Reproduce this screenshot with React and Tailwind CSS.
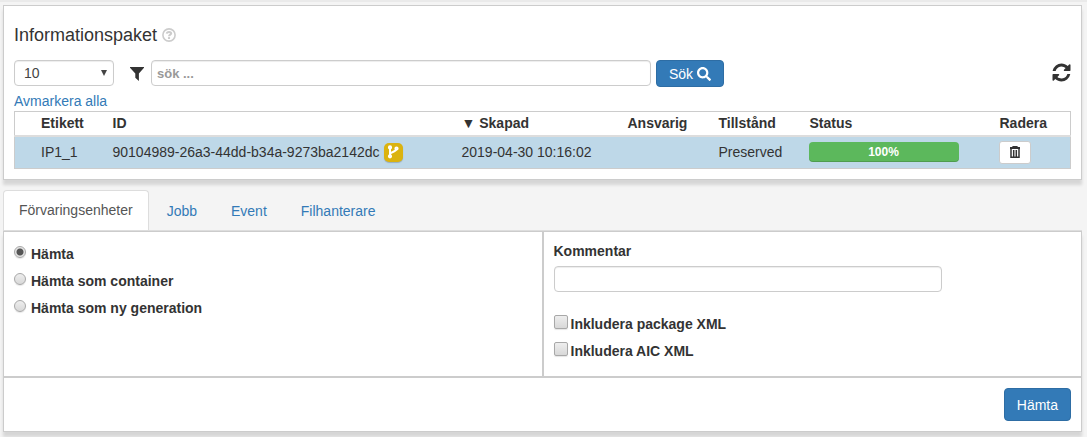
import React, { useState } from "react";
import { FaSearch } from "react-icons/fa";

const icons = {
  refresh:
    "M1639 1056q0 5-1 7-64 268-268 434.5t-478 166.5q-146 0-282.5-55t-243.5-157l-129 129q-19 19-45 19t-45-19-19-45v-448q0-26 19-45t45-19h448q26 0 45 19t19 45-19 45l-137 137q71 66 161 102t187 36q134 0 250-65t186-179q11-17 53-117 8-23 30-23h192q13 0 22.5 9.5t9.5 22.5zm25-800v448q0 26-19 45t-45 19h-448q-26 0-45-19t-19-45 19-45l138-138q-148-137-349-137-134 0-250 65t-186 179q-11 17-53 117-8 23-30 23h-199q-13 0-22.5-9.5t-9.5-22.5v-7q65-268 270-434.5t480-166.5q146 0 284 55.5t245 156.5l130-129q19-19 45-19t45 19 19 45z",
};

function RefreshIcon() {
  return (
    <svg viewBox="0 0 1792 1792" className="size-[21px]" fill="currentColor" aria-hidden="true">
      <path d={icons.refresh} />
    </svg>
  );
}

function FilterIcon() {
  return (
    <svg viewBox="0 0 14 14" className="mt-[7px] ml-4 size-3.5 shrink-0" fill="currentColor" aria-hidden="true">
      <path d="M0 0h14v.8L8.900 6.500V14L5.300 10.800V6.500L0 .8z" />
    </svg>
  );
}

function HelpIcon() {
  return (
    <svg viewBox="0 0 14 14" className="size-3.5 text-[#ccc]" fill="none" stroke="currentColor" aria-hidden="true">
      <circle cx="7" cy="7" r="6.100" strokeWidth="1.600" />
      <path d="M4.700 5.700C4.900 4.400 5.700 3.900 7 3.900c1.300 0 2.200.6 2.200 1.600C9.200 6.700 7 6.700 7 8.300" strokeWidth="2" />
      <path d="M7 9.100v1.900" strokeWidth="2.100" />
    </svg>
  );
}

function BranchIcon() {
  return (
    <svg viewBox="0 0 12 14" className="h-3.5 w-3" fill="none" stroke="currentColor" aria-hidden="true">
      <path d="M3 2.500v9M9.500 3.500c0 4-6.500 3-6.500 6" strokeWidth="2" />
      <circle cx="3" cy="2.400" r="1.200" strokeWidth="1.800" />
      <circle cx="3" cy="11.300" r="1.200" strokeWidth="1.800" />
      <circle cx="9.500" cy="3.500" r="1.200" strokeWidth="1.800" />
    </svg>
  );
}

function TrashIcon() {
  return (
    <svg viewBox="0 0 12 14" className="h-3.5 w-3" fill="none" stroke="currentColor" aria-hidden="true">
      <path d="M1 3h10" strokeWidth="2" />
      <path d="M4 2.500V1.500h4v1" strokeWidth="1.200" />
      <path d="M2 3.500V12.300h8V3.500M4.700 5v7M7.300 5v7" strokeWidth="1.500" />
    </svg>
  );
}

const inputClass =
  "h-[26px] rounded border border-[#ccc] bg-white px-[5px] text-[13px] font-bold text-[#555] shadow-[inset_0_1px_1px_rgba(0,0,0,0.075)] placeholder:text-[#999]";
const panelClass = "border border-[#ccc] bg-white shadow-[0_5px_3px_rgba(0,0,0,0.12)]";
const primaryClass = "rounded border border-[#2e6da4] bg-[#337ab7] text-sm text-white";

function Choice({ type, label, name, ...rest }) {
  const radio = type === "radio";
  const shape = radio
    ? "size-3 rounded-full checked:bg-[radial-gradient(circle,#555_0_3px,#e4e4e4_4px)]"
    : "size-3.5 rounded-xs";
  return (
    <label className={`flex h-[27px] items-center text-sm font-bold ${radio ? "gap-[5px]" : "gap-[3px]"}`}>
      <input
        type={type}
        name={name}
        className={`${shape} mb-1 appearance-none border border-[#a8a8a8] bg-linear-to-b from-[#eee] to-[#d8d8d8] shadow-[0_1px_1px_rgba(0,0,0,0.1)]`}
        {...rest}
      />
      {label}
    </label>
  );
}

const tabs = ["Förvaringsenheter", "Jobb", "Event", "Filhanterare"];

export default function App() {
  const [tab, setTab] = useState(tabs[0]);
  return (
    <main className="overflow-hidden border-t-2 border-[#eaeaea] bg-[#f4f4f4] pt-[3px] pr-[5px] pb-1.5 pl-[3px] font-['Liberation_Sans',Arial,sans-serif] text-sm text-[#333]">
      <section className={`${panelClass} px-2.5 pt-4 pb-2.5`}>
        <h1 className="flex h-[26px] items-center gap-[5px] text-lg">
          Informationspaket <HelpIcon />
        </h1>
        <div className="mt-3 flex h-[27px] items-start">
          <div className="relative w-[100px] shrink-0">
            <select
              aria-label="Antal per sida"
              className="block h-[26px] w-full appearance-none rounded border border-[#ccc] bg-white pl-[9px] text-sm text-[#444] shadow-[inset_0_1px_1px_rgba(0,0,0,0.075)]"
              defaultValue="10"
            >
              <option>10</option>
              <option>25</option>
            </select>
            <svg viewBox="0 0 6 6" className="pointer-events-none absolute top-2.5 right-[7px] size-1.5" fill="#444" aria-hidden="true">
              <path d="M0 0h6L3 6z" />
            </svg>
          </div>
          <FilterIcon />
          <input aria-label="Sök" placeholder="sök ..." className={`${inputClass} ml-[7px] w-[500px] min-w-0`} />
          <button className={`${primaryClass} ml-[5px] flex h-[27px] items-center gap-1 px-3`}>
            Sök <FaSearch className="size-3.5" />
          </button>
          <button aria-label="Uppdatera" className="mt-0.5 -mr-px ml-auto">
            <RefreshIcon />
          </button>
        </div>
        <a href="#avmarkera" className="mt-1 block h-5 leading-5 text-[#337ab7]">Avmarkera alla</a>
        <table className="w-full table-fixed border-collapse border border-[#ccc] text-left">
          <colgroup>
            <col className="w-[92px]" />
            <col className="w-[349px]" />
            <col className="w-[166px]" />
            <col className="w-[91px]" />
            <col className="w-[91px]" />
            <col className="w-[190px]" />
            <col />
          </colgroup>
          <thead>
            <tr className="h-6 border-b-2 border-[#ddd]">
              <th className="pl-[26px]">Etikett</th>
              <th className="pl-1.5">ID</th>
              <th className="pl-1.5">▼ Skapad</th>
              <th className="pl-1.5">Ansvarig</th>
              <th className="pl-1.5">Tillstånd</th>
              <th className="pl-1.5">Status</th>
              <th className="pl-1.5">Radera</th>
            </tr>
          </thead>
          <tbody>
            <tr className="h-[33px] bg-[#bed8e8]">
              <td className="pl-[26px]">IP1_1</td>
              <td className="pl-1.5">
                <span className="flex items-center gap-1">
                  90104989-26a3-44dd-b34a-9273ba2142dc
                  <span className="flex size-[19px] items-center justify-center rounded-[5px] bg-[#dbb30f] text-white shadow-[0_1px_1px_rgba(0,0,0,0.2)]">
                    <BranchIcon />
                  </span>
                </span>
              </td>
              <td className="pl-1.5">2019-04-30 10:16:02</td>
              <td />
              <td className="pl-1.5">Preserved</td>
              <td className="pl-[5px]">
                <div
                  role="progressbar"
                  aria-label="Status"
                  aria-valuenow={100}
                  className="h-5 w-[150px] rounded bg-[#5cb85c] text-center text-xs leading-5 font-bold text-white shadow-[inset_0_-1px_0_rgba(0,0,0,0.15)]"
                >
                  100%
                </div>
              </td>
              <td className="pl-[5px]">
                <button
                  aria-label="Radera"
                  className="flex h-[23px] w-8 items-center justify-center rounded-[3px] border border-[#ccc] bg-white"
                >
                  <TrashIcon />
                </button>
              </td>
            </tr>
          </tbody>
        </table>
      </section>

      <nav className="mt-2.5 flex border-b border-[#ddd]">
        {tabs.map((name) => (
          <button
            key={name}
            onClick={() => setTab(name)}
            className={`mr-0.5 h-10 rounded-t border border-b-0 px-[15px] ${
              tab === name ? "-mb-px border-[#ddd] bg-white pb-px text-[#555]" : "border-transparent text-[#337ab7]"
            }`}
          >
            {name}
          </button>
        ))}
      </nav>

      <section className={panelClass}>
        <div className="grid grid-cols-[calc(50%-1px)_1fr] border-b-2 border-[#ccc]">
          <div className="min-h-36 px-2.5 pt-2">
            <Choice type="radio" name="action" label="Hämta" defaultChecked />
            <Choice type="radio" name="action" label="Hämta som container" />
            <Choice type="radio" name="action" label="Hämta som ny generation" />
          </div>
          <div className="border-l-2 border-[#ccc] px-2.5 pt-[9px]">
            <label htmlFor="comment" className="block h-[25px] leading-5 font-bold">Kommentar</label>
            <input id="comment" className={`${inputClass} block w-[388px] max-w-full`} />
            <div className="mt-[18px]">
              <Choice type="checkbox" label="Inkludera package XML" />
              <Choice type="checkbox" label="Inkludera AIC XML" />
            </div>
          </div>
        </div>
        <div className="flex justify-end p-2.5">
          <button className={`${primaryClass} h-[33px] px-3`}>Hämta</button>
        </div>
      </section>
    </main>
  );
}
